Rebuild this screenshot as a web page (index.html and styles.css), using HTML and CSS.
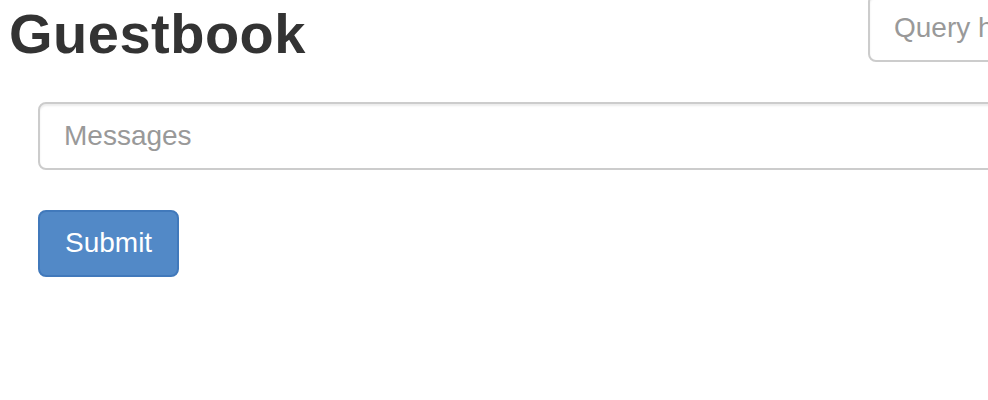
FILE: index.html
```html
<!DOCTYPE html>
<html lang="en">

<head>
    <meta charset="UTF-8">
    <meta name="viewport" content="width=device-width, initial-scale=1.0">
    <title>Guestbook</title>
    <link rel="stylesheet" href="styles.css">
</head>

<body>

    <div class="page">
        <!-- Заголовок и поиск -->
        <div class="header">
            <h1>Guestbook</h1>
            <form class="search" action="/search" method="get">
                <input type="text" name="q" class="form-control" placeholder="Query here">
            </form>
        </div>

        <!-- Форма сообщения -->
        <form id="messageForm" class="message-form" action="/sign" method="post">
            <div class="form-group">
                <input type="text" name="content" class="form-control" placeholder="Messages">
            </div>
            <button type="submit" class="btn">Submit</button>
        </form>
    </div>

</body>

</html>
```

FILE: styles.css
```css
body {
    margin: 0;
    font-family: "Liberation Sans", Arial, sans-serif;
    color: #333;
    overflow: hidden;
}

.page {
    width: 988px;
    overflow: hidden;
}

.header {
    display: flex;
    justify-content: space-between;
    align-items: flex-start;
}

.header h1 {
    margin: 3px 0 0 9px;
    font-size: 56px;
    line-height: 1.1;
    font-weight: bold;
    letter-spacing: 0.5px;
}

.search {
    flex: none;
    width: 120px;
    margin-top: -6px;
}

.search .form-control {
    width: 400px;
}

.form-control {
    box-sizing: border-box;
    height: 68px;
    padding: 12px 24px;
    font-family: inherit;
    font-size: 28px;
    color: #555;
    background-color: #fff;
    border: 2px solid #ccc;
    border-radius: 8px;
    box-shadow: inset 0 2px 2px rgba(0, 0, 0, 0.075);
    outline: none;
}

.form-control::placeholder {
    color: #999;
}

.message-form {
    margin-top: 37px;
    padding-left: 38px;
}

.form-group {
    margin-bottom: 40px;
}

.form-group .form-control {
    width: 1100px;
}

.btn {
    box-sizing: border-box;
    height: 67px;
    padding: 12px 25px;
    font-family: inherit;
    font-size: 28px;
    color: #fff;
    background-color: #5289c7;
    border: 2px solid #4179bb;
    border-radius: 8px;
    cursor: pointer;
}
```
